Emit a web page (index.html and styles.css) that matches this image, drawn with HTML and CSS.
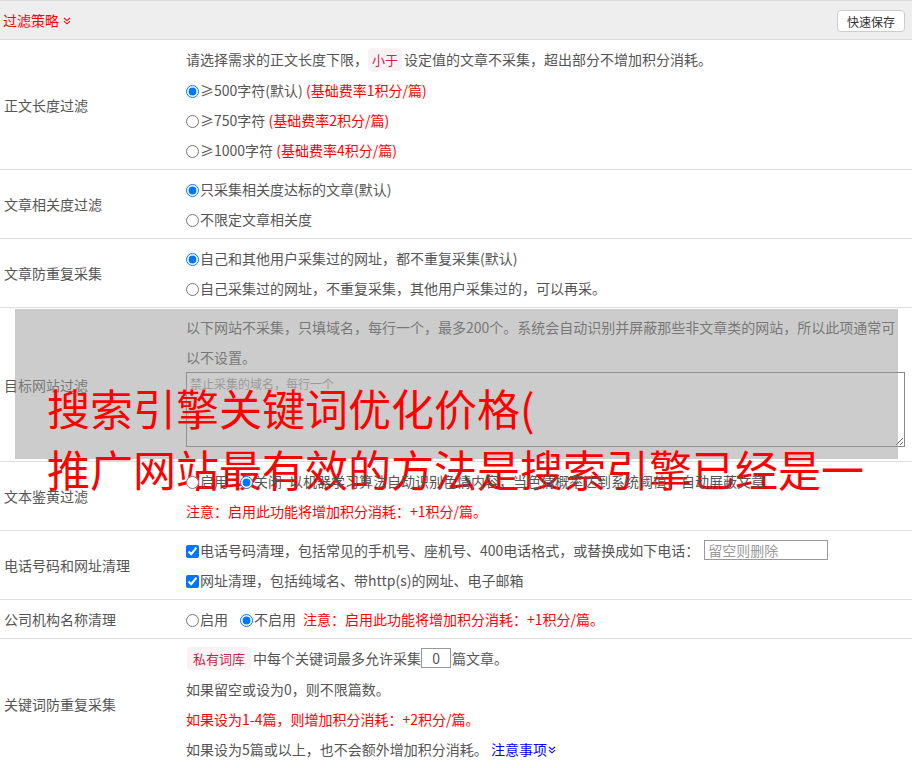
FILE: index.html
```html
<!DOCTYPE html>
<html lang="zh-CN">
<head>
<meta charset="UTF-8">
<title>过滤策略</title>
<link rel="stylesheet" href="styles.css">
</head>
<body>
<div class="panel">
  <div class="panel-head">
    <span class="head-title">过滤策略
      <svg class="dchev" width="8" height="8" viewBox="0 0 8 8"><path d="M1 1L4 3.6L7 1M1 4.2L4 6.8L7 4.2" fill="none" stroke="#f00" stroke-width="1.1"/></svg>
    </span>
    <button class="btn-save">快速保存</button>
  </div>

  <div class="row">
    <div class="row-label">正文长度过滤</div>
    <div class="row-body">
      <p>请选择需求的正文长度下限，<code>小于</code>设定值的文章不采集，超出部分不增加积分消耗。</p>
      <p><label><input type="radio" name="len" checked>≥500字符(默认)</label> <span class="red">(基础费率1积分/篇)</span></p>
      <p><label><input type="radio" name="len">≥750字符</label> <span class="red">(基础费率2积分/篇)</span></p>
      <p><label><input type="radio" name="len">≥1000字符</label> <span class="red">(基础费率4积分/篇)</span></p>
    </div>
  </div>

  <div class="row">
    <div class="row-label">文章相关度过滤</div>
    <div class="row-body">
      <p><label><input type="radio" name="rel" checked>只采集相关度达标的文章(默认)</label></p>
      <p><label><input type="radio" name="rel">不限定文章相关度</label></p>
    </div>
  </div>

  <div class="row">
    <div class="row-label">文章防重复采集</div>
    <div class="row-body">
      <p><label><input type="radio" name="dup" checked>自己和其他用户采集过的网址，都不重复采集(默认)</label></p>
      <p><label><input type="radio" name="dup">自己采集过的网址，不重复采集，其他用户采集过的，可以再采。</label></p>
    </div>
  </div>

  <div class="row row-site">
    <div class="row-label">目标网站过滤</div>
    <div class="row-body">
      <p>以下网站不采集，只填域名，每行一个，最多200个。系统会自动识别并屏蔽那些非文章类的网站，所以此项通常可以不设置。</p>
      <textarea class="site-list" placeholder="禁止采集的域名，每行一个"></textarea>
    </div>
    <div class="mask">
      <div class="mask-title">搜索引擎关键词优化价格(<br>推广网站最有效的方法是搜索引擎已经是一</div>
    </div>
  </div>

  <div class="row">
    <div class="row-label">文本鉴黄过滤</div>
    <div class="row-body">
      <p><label class="opt"><input type="radio" name="porn">启用</label><label class="opt"><input type="radio" name="porn" checked>关闭</label>以机器学习算法自动识别色情内容，当色情概率达到系统阈值，自动屏蔽文章</p>
      <p class="red">注意：启用此功能将增加积分消耗：+1积分/篇。</p>
    </div>
  </div>

  <div class="row">
    <div class="row-label">电话号码和网址清理</div>
    <div class="row-body">
      <p><label><input type="checkbox" checked>电话号码清理，包括常见的手机号、座机号、400电话格式，或替换成如下电话：</label><input type="text" class="phone" placeholder="留空则删除"></p>
      <p><label><input type="checkbox" checked>网址清理，包括纯域名、带http(s)的网址、电子邮箱</label></p>
    </div>
  </div>

  <div class="row">
    <div class="row-label">公司机构名称清理</div>
    <div class="row-body">
      <p><label class="opt"><input type="radio" name="org">启用</label><label class="opt"><input type="radio" name="org" checked>不启用</label><span class="red">注意：启用此功能将增加积分消耗：+1积分/篇。</span></p>
    </div>
  </div>

  <div class="row">
    <div class="row-label">关键词防重复采集</div>
    <div class="row-body">
      <p><code class="lib">私有词库</code>中每个关键词最多允许采集<input type="text" class="num" value="0">篇文章。</p>
      <p>如果留空或设为0，则不限篇数。</p>
      <p class="red">如果设为1-4篇，则增加积分消耗：+2积分/篇。</p>
      <p>如果设为5篇或以上，也不会额外增加积分消耗。 <a href="#" class="more">注意事项<svg class="dchev" width="8" height="8" viewBox="0 0 8 8"><path d="M1 1L4 3.6L7 1M1 4.2L4 6.8L7 4.2" fill="none" stroke="#00f" stroke-width="1.1"/></svg></a></p>
    </div>
  </div>
</div>
</body>
</html>
```

FILE: styles.css
```css
body {
  margin: 0;
  padding: 0;
  background-color: #fff;
  color: #555;
  font-family: "Microsoft YaHei", "Noto Sans CJK SC", sans-serif;
  font-size: 14px;
}
.panel {
  width: 912px;
}
.panel-head {
  display: flex;
  align-items: center;
  justify-content: space-between;
  height: 38px;
  background-color: #eee;
  border-top: 1px solid #ddd;
  border-bottom: 1px solid #ddd;
  padding: 0 7px 0 3px;
}
.head-title {
  color: #f00;
  font-size: 14px;
}
.dchev {
  vertical-align: 1px;
  margin-left: 1px;
}
.btn-save {
  width: 68px;
  height: 22px;
  margin-top: 2px;
  padding: 0;
  background-color: #fff;
  border: 1px solid #ccc;
  border-radius: 4px;
  color: #333;
  font-family: inherit;
  font-size: 12px;
  cursor: pointer;
}
.row {
  position: relative;
  display: grid;
  grid-template-columns: 186px 1fr;
  border-bottom: 1px solid #ddd;
}
.row-label {
  display: flex;
  align-items: center;
  padding-left: 4px;
}
.row-body {
  padding: 4px 10px 4px 0;
}
.row-body p {
  margin: 0;
  line-height: 30px;
  white-space: nowrap;
}
.row-site .row-body p {
  white-space: normal;
}
.red {
  color: #f00;
}
code {
  font-family: inherit;
  font-size: 13px;
  color: #c7254e;
  background-color: #f9f2f4;
  border-radius: 4px;
  padding: 2px 4px;
  margin-right: 2px;
}
code.lib {
  margin-left: 1px;
  padding: 2px 6px;
  margin-right: 2px;
}
input[type="radio"],
input[type="checkbox"] {
  margin: 0 1px 0 0;
  width: 13px;
  height: 13px;
  vertical-align: -2px;
}
.opt {
  margin-right: 12px;
}
.opt + .opt {
  margin-right: 7px;
}
.site-list {
  display: block;
  box-sizing: border-box;
  width: 719px;
  height: 75px;
  margin: 0 0 10px 0;
  padding: 2px 3px;
  border: 1px solid #888;
  background-color: #fff;
  font-family: inherit;
  font-size: 12px;
  color: #555;
}
.site-list::placeholder {
  color: #999;
}
.mask {
  position: absolute;
  left: 15px;
  right: 14px;
  top: 1px;
  bottom: 2px;
  background-color: rgba(153, 153, 153, 0.5);
}
.mask-title {
  position: absolute;
  top: 68px;
  left: 32px;
  color: #f00;
  font-size: 43px;
  line-height: 61px;
  white-space: nowrap;
}
.phone {
  box-sizing: border-box;
  width: 124px;
  height: 20px;
  margin-left: 5px;
  padding: 0 3px;
  border: 1px solid #999;
  font-family: inherit;
  font-size: 14px;
  vertical-align: 0;
}
.phone::placeholder {
  color: #999;
}
.num {
  box-sizing: border-box;
  width: 30px;
  height: 20px;
  padding: 0;
  margin: 0 1px 0 0;
  border: 1px solid #999;
  text-align: center;
  font-family: inherit;
  font-size: 14px;
  color: #555;
  vertical-align: 0;
}
.more {
  color: #00f;
  text-decoration: none;
}
```
